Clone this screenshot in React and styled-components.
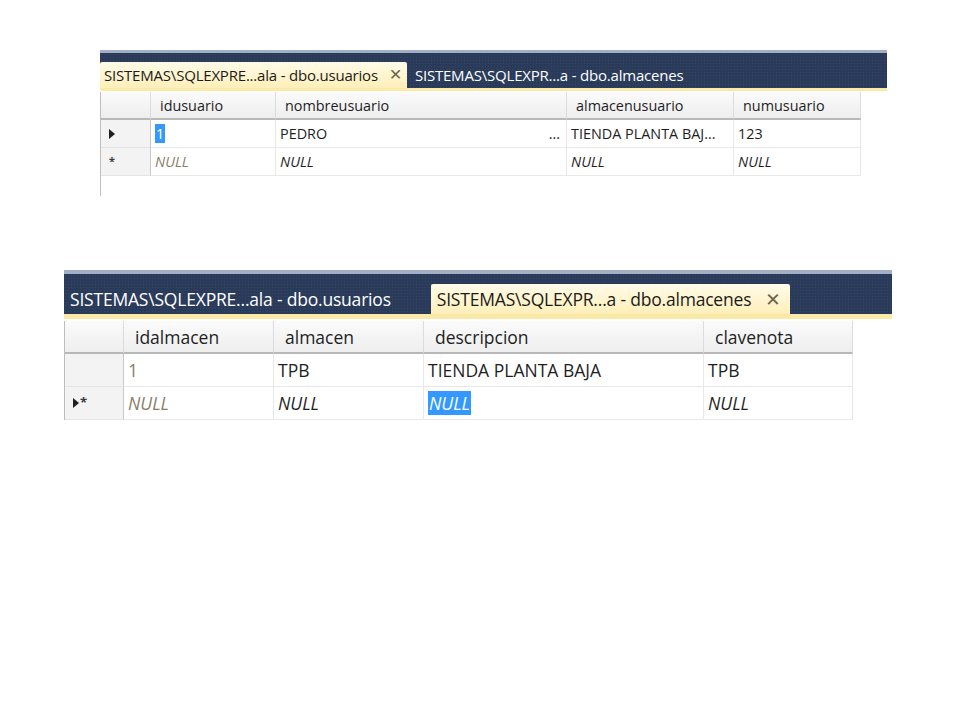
import React from 'react';
import styled, { createGlobalStyle } from 'styled-components';

const GlobalStyle = createGlobalStyle`
  html, body {
    margin: 0;
    background: #ffffff;
  }
  body {
    width: 960px;
    height: 720px;
    overflow: hidden;
    font-family: 'Open Sans', 'Noto Sans', 'DejaVu Sans', sans-serif;
  }
`;

const Page = styled.div`
  display: flex;
  flex-direction: column;
  padding-top: 50px;
  gap: 74px;
`;

const Panel = styled.section`
  margin-left: ${(p) => p.left}px;
  width: ${(p) => p.width}px;
  font-size: ${(p) => p.fs}px;
  color: #1e1e1e;
`;

const TabStrip = styled.div`
  display: flex;
  align-items: flex-end;
  height: ${(p) => p.h}px;
  font-size: ${(p) => p.fs}px;
  border-top: ${(p) => p.top}px solid #a3afc4;
  border-bottom: ${(p) => p.line}px solid #fbe9a8;
  background-color: #2a3a59;
  background-image: radial-gradient(#34476b 0.8px, transparent 1px);
  background-size: 3px 3px;
`;

const Tab = styled.div`
  display: flex;
  align-items: center;
  gap: ${(p) => p.gap}px;
  height: ${(p) => p.h}px;
  padding: 0 ${(p) => p.padR}px 0 ${(p) => p.padL}px;
  white-space: nowrap;
  letter-spacing: -0.2px;
  color: ${(p) => (p.active ? '#1b1b1b' : '#ffffff')};
  background: ${(p) => (p.active ? 'linear-gradient(#fffbe8, #ffefb9)' : 'transparent')};
  border-radius: ${(p) => (p.active ? '2px 2px 0 0' : '0')};
`;

const Close = styled.span`
  color: #6a6448;
  font-size: 1.05em;
  line-height: 1;
`;

const Grid = styled.div`
  display: grid;
  grid-template-columns: ${(p) => p.cols};
  width: fit-content;
  margin-top: ${(p) => p.gapTop}px;
  border-left: 1px solid #bdbdbd;
  padding-bottom: ${(p) => p.tail}px;
`;

const HeadCell = styled.div`
  height: ${(p) => p.h}px;
  display: flex;
  align-items: center;
  padding-left: ${(p) => p.pad}px;
  background: linear-gradient(#fbfbfb, #eeeeee);
  border-right: 1px solid #dcdcdc;
  border-bottom: 2px solid #b8b8b8;
  white-space: nowrap;
`;

const Selector = styled.div`
  height: ${(p) => p.h}px;
  display: flex;
  align-items: center;
  padding-left: ${(p) => p.pad}px;
  gap: 1px;
  background: #f3f3f3;
  border-right: 1px solid #c8c8c8;
  border-bottom: 1px solid #e4e4e4;
  color: #3a3a3a;
  font-size: 0.75em;
`;

const Cell = styled.div`
  height: ${(p) => p.h}px;
  display: flex;
  align-items: center;
  padding-left: ${(p) => p.pad}px;
  padding-right: 6px;
  background: #ffffff;
  border-right: 1px solid #e8e8e8;
  border-bottom: 1px solid #e8e8e8;
  white-space: nowrap;
  overflow: hidden;
  font-style: ${(p) => (p.italic ? 'italic' : 'normal')};
  color: ${(p) => (p.dim ? '#8a7d69' : '#1e1e1e')};
`;

const Fill = styled.span`
  flex: 1;
`;

const Mark = styled.span`
  background: #3399ff;
  color: #ffffff;
  padding: 0 1px;
`;

const Triangle = styled.span`
  display: inline-block;
  width: 0;
  height: 0;
  border-top: ${(p) => p.s}px solid transparent;
  border-bottom: ${(p) => p.s}px solid transparent;
  border-left: ${(p) => p.s + 1}px solid #202020;
`;

const Star = styled.span`
  font-weight: bold;
  line-height: 1;
`;

const renderCell = (cell, key, h, pad) => {
  const { text, italic, dim, mark, dots } = cell;
  return (
    <Cell key={key} h={h} pad={pad} italic={italic} dim={dim}>
      {mark ? <Mark>{text}</Mark> : text}
      {dots && (
        <>
          <Fill />
          <span>...</span>
        </>
      )}
    </Cell>
  );
};

const TablePanel = ({ cfg }) => (
  <Panel left={cfg.left} width={cfg.width} fs={cfg.fs}>
    <TabStrip h={cfg.stripH} fs={cfg.tabFs} top={cfg.topLine} line={cfg.line}>
      {cfg.tabs.map((t, i) => (
        <Tab key={i} active={t.active} h={cfg.tabH} padL={t.padL} padR={t.padR} gap={cfg.closeGap}>
          {t.label}
          {t.active && <Close>✕</Close>}
        </Tab>
      ))}
    </TabStrip>
    <Grid cols={cfg.cols} gapTop={cfg.gridTop} tail={cfg.tail}>
      <HeadCell h={cfg.headH} pad={0} />
      {cfg.headers.map((h) => (
        <HeadCell key={h} h={cfg.headH} pad={cfg.headPad}>
          {h}
        </HeadCell>
      ))}
      {cfg.rows.map((row, r) => (
        <React.Fragment key={r}>
          <Selector h={cfg.rowH} pad={cfg.selPad}>
            {row.arrow && <Triangle s={cfg.tri} />}
            {row.star && <Star>*</Star>}
          </Selector>
          {row.cells.map((c, i) => renderCell(c, i, cfg.rowH, cfg.cellPad))}
        </React.Fragment>
      ))}
    </Grid>
  </Panel>
);

const NULL_I = { text: 'NULL', italic: true };

const usuarios = {
  left: 100,
  width: 787,
  fs: 14.4,
  tabFs: 15,
  topLine: 3,
  stripH: 35,
  line: 3,
  tabH: 26,
  closeGap: 11,
  tabs: [
    { label: 'SISTEMAS\\SQLEXPRE...ala - dbo.usuarios', active: true, padL: 4, padR: 5 },
    { label: 'SISTEMAS\\SQLEXPR...a - dbo.almacenes', padL: 8, padR: 6 },
  ],
  gridTop: 1,
  tail: 20,
  cols: '50px 125px 291px 167px 127px',
  headH: 26,
  rowH: 27,
  headPad: 9,
  cellPad: 4,
  selPad: 8,
  tri: 5,
  headers: ['idusuario', 'nombreusuario', 'almacenusuario', 'numusuario'],
  rows: [
    {
      arrow: true,
      cells: [
        { text: '1', mark: true },
        { text: 'PEDRO', dots: true },
        { text: 'TIENDA PLANTA BAJ...' },
        { text: '123' },
      ],
    },
    {
      star: true,
      cells: [{ ...NULL_I, dim: true }, NULL_I, NULL_I, NULL_I],
    },
  ],
};

const almacenes = {
  left: 64,
  width: 828,
  fs: 17.5,
  tabFs: 17.5,
  topLine: 4,
  stripH: 40,
  line: 5,
  tabH: 30,
  closeGap: 14,
  tabs: [
    { label: 'SISTEMAS\\SQLEXPRE...ala - dbo.usuarios', padL: 6, padR: 40 },
    { label: 'SISTEMAS\\SQLEXPR...a - dbo.almacenes', active: true, padL: 6, padR: 9 },
  ],
  gridTop: 2,
  tail: 0,
  cols: '59px 150px 150px 280px 149px',
  headH: 31,
  rowH: 32,
  headPad: 11,
  cellPad: 4,
  selPad: 8,
  tri: 5,
  headers: ['idalmacen', 'almacen', 'descripcion', 'clavenota'],
  rows: [
    {
      cells: [{ text: '1', dim: true }, { text: 'TPB' }, { text: 'TIENDA PLANTA BAJA' }, { text: 'TPB' }],
    },
    {
      arrow: true,
      star: true,
      cells: [{ ...NULL_I, dim: true }, NULL_I, { ...NULL_I, mark: true }, NULL_I],
    },
  ],
};

export default function App() {
  return (
    <>
      <GlobalStyle />
      <Page>
        <TablePanel cfg={usuarios} />
        <TablePanel cfg={almacenes} />
      </Page>
    </>
  );
}
